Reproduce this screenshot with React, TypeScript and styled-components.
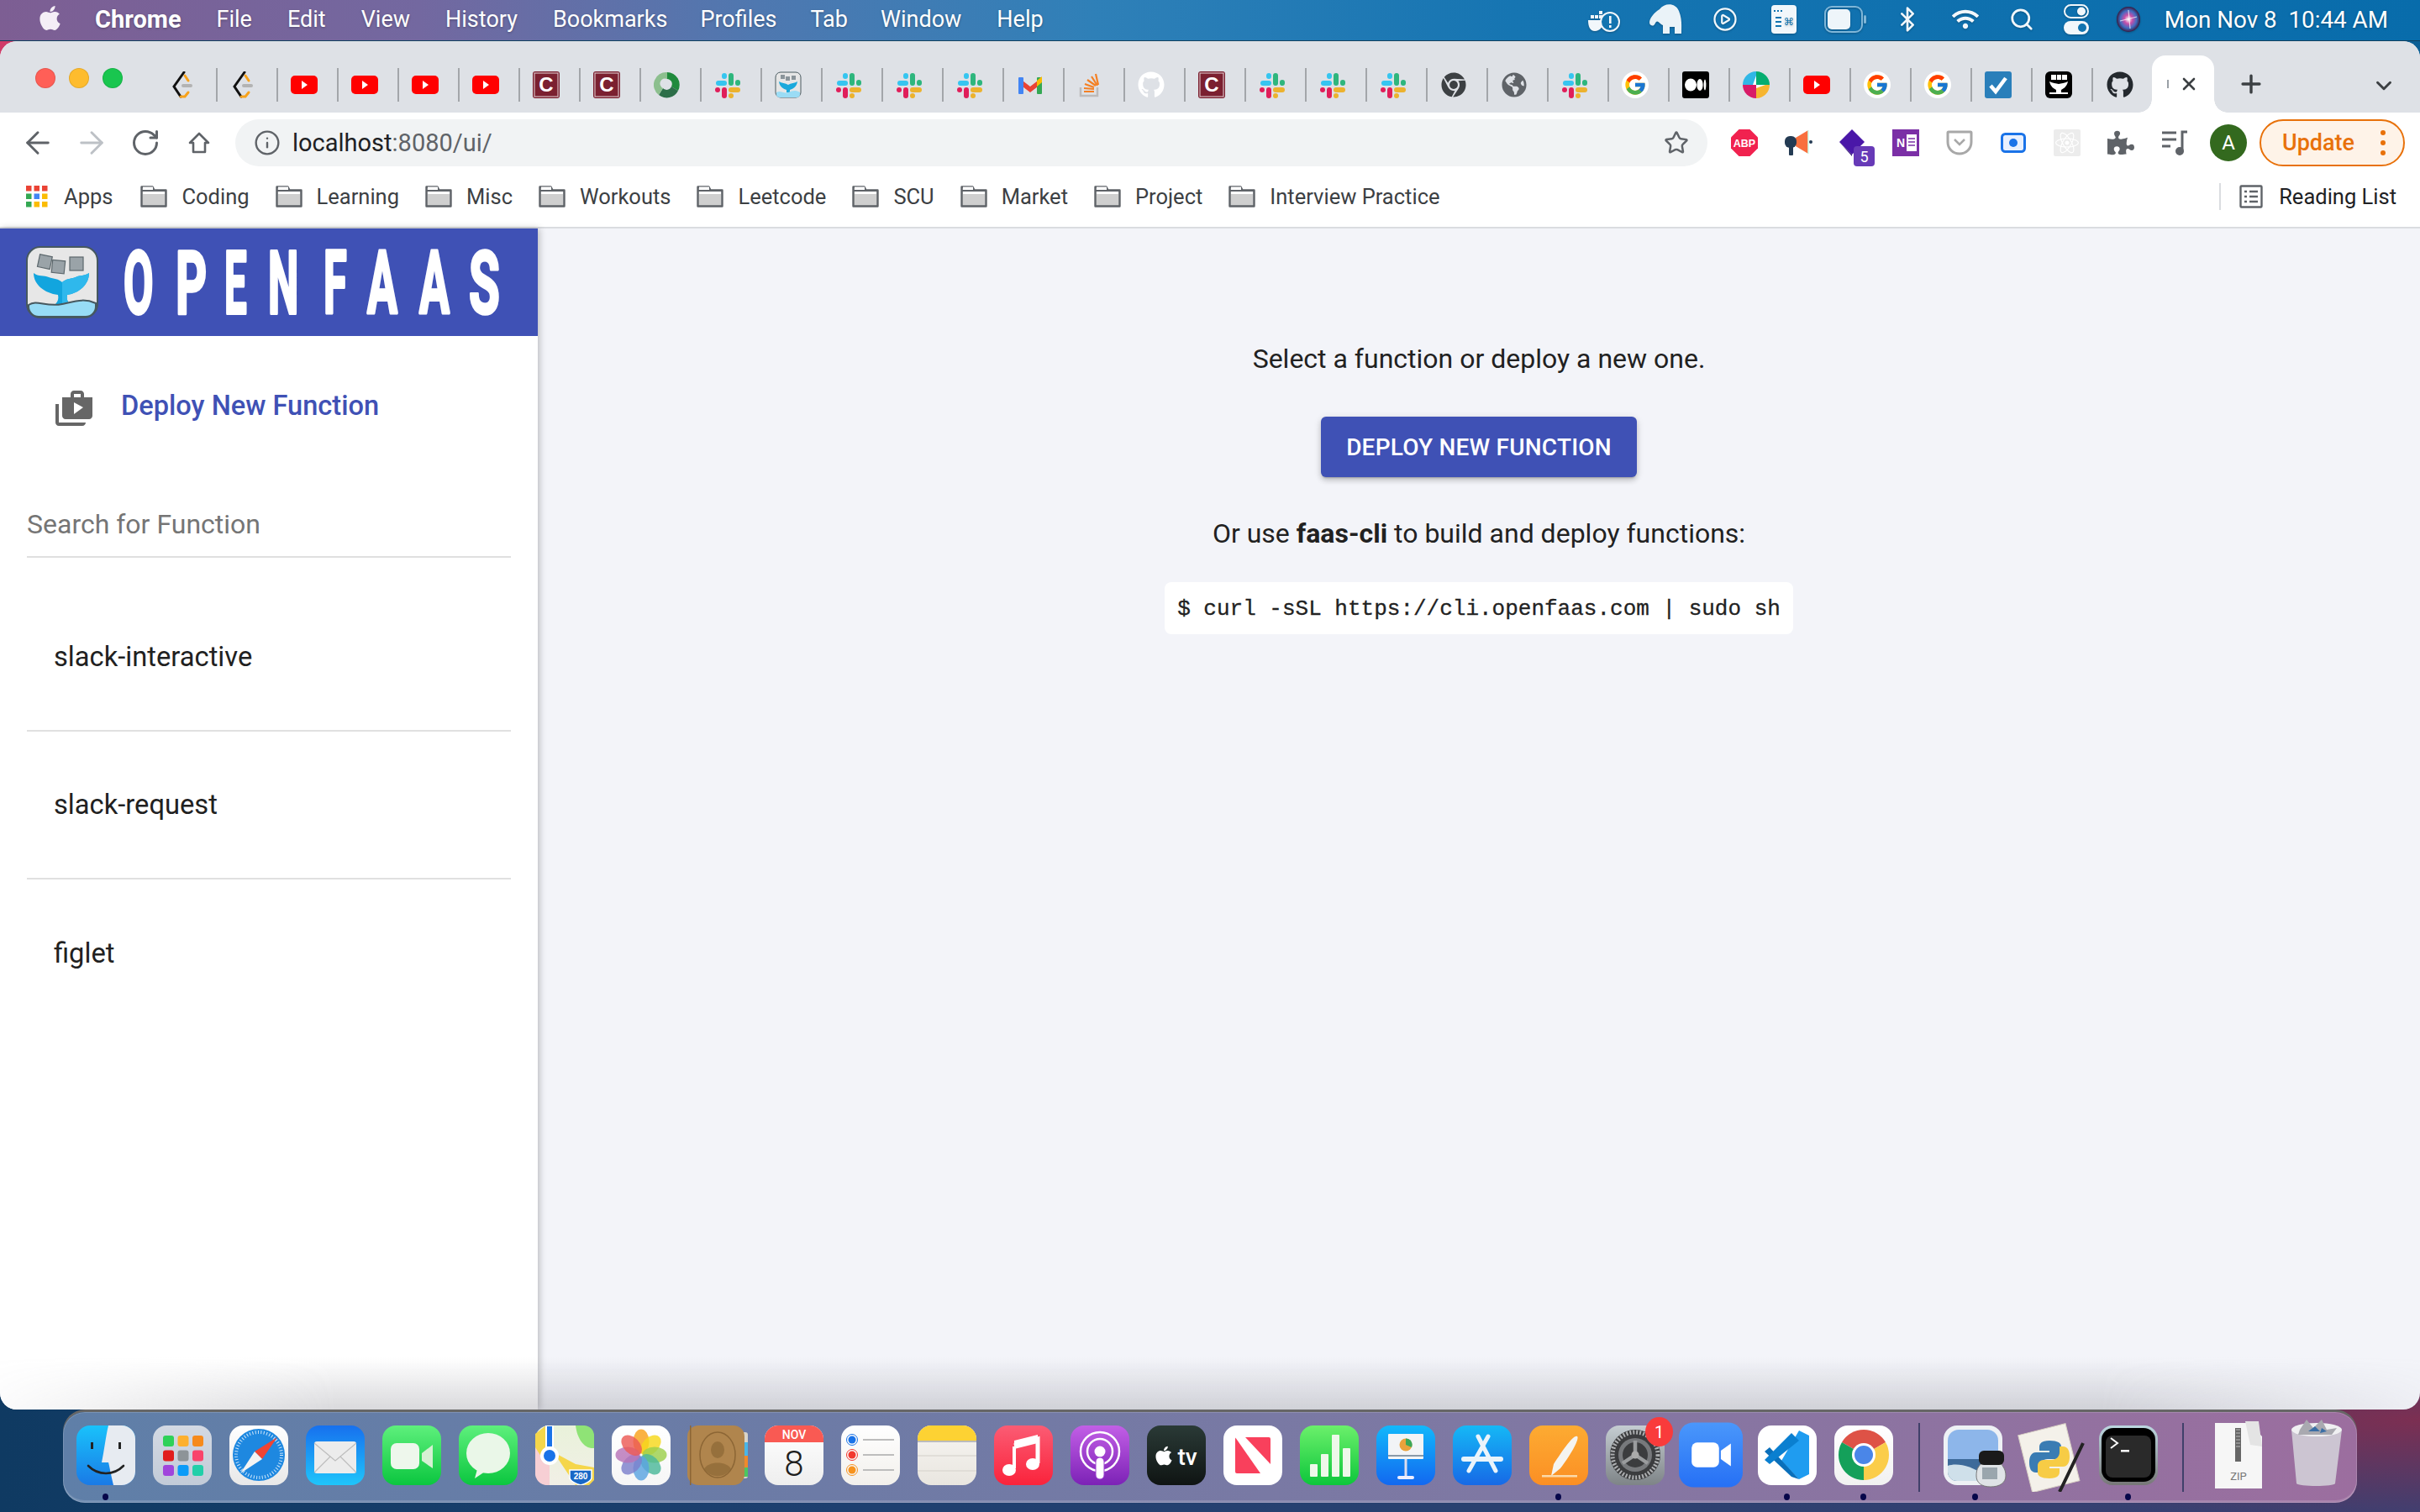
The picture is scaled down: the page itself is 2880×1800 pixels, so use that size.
import React from "react";
import styled, { createGlobalStyle } from "styled-components";
import { ArrowLeft, ArrowRight, RotateCw, Info, Star, Search, Plus, X, ChevronDown, Bluetooth, CirclePlay } from "lucide-react";
import { FaApple, FaGithub, FaChrome, FaGlobeAmericas, FaWifi, FaPuzzlePiece, FaReact } from "react-icons/fa";
import { FcGoogle } from "react-icons/fc";
import { MdShopTwo } from "react-icons/md";

const Global = createGlobalStyle`
  html, body { margin: 0; padding: 0; width: 2880px; height: 1800px; overflow: hidden; }
  body { font-family: Roboto, "Liberation Sans", sans-serif; }
  * { box-sizing: border-box; }
`;

const Screen = styled.div`
  width: 2880px; height: 1800px; display: flex; flex-direction: column; overflow: hidden;
  background:
    linear-gradient(90deg, #d03b68 0, #a03a6c 560px, #1a5a80 590px, #0c5f95 2880px) top / 100% 80px no-repeat,
    radial-gradient(700px 120px at 100% 1690px, #7c2f52 0%, rgba(124,47,82,0) 100%),
    linear-gradient(90deg, #0f3a62 0, #1e4070 1000px, #2a4170 1800px, #3c4072 2880px);
`;
const MenuBar = styled.header`
  height: 49px; flex: none; display: flex; align-items: center; justify-content: space-between;
  padding: 0 38px 2px 44px; color: #fff; font-size: 27px; text-shadow: 0 1px 3px rgba(0,0,0,.3);
  background: linear-gradient(90deg, #7d5e93 0, #7368a0 500px, #4f78b0 900px, #2f80b8 1300px, #1675b2 1800px, #086cab 2880px);
  border-bottom: 1px solid #11405e;
`;
const MenuLeft = styled.nav`display: flex; align-items: center;`;
const AppleMark = styled(FaApple)`width: 31px; height: 33px; margin-right: 38px; margin-top: -3px; color: #f4eef6;`;
const MenuItem = styled.span<{ $bold?: boolean; $gap: number }>`
  font-weight: ${p => (p.$bold ? 700 : 400)}; font-size: ${p => (p.$bold ? 29 : 27)}px; margin-right: ${p => p.$gap}px; white-space: nowrap;
`;
const StatusArea = styled.div`display: flex; align-items: center;`;
const StatusSlot = styled.span<{ $w: number }>`
  width: ${p => p.$w}px; display: flex; align-items: center; justify-content: center; color: #f2f7fb;
  svg { display: block; filter: drop-shadow(0 1px 1px rgba(0,0,0,.25)); }
`;
const Clock = styled.span`margin-left: 12px; white-space: pre; font-size: 27.8px;`;

const Win = styled.div`
  height: 1629px; flex: none; border-radius: 20px; background: #f3f4f9; display: flex; flex-direction: column;
  position: relative; overflow: hidden;
`;
const TabStrip = styled.div`
  height: 85px; flex: none; background: #dee1e6; display: flex; align-items: flex-end; padding-left: 42px;
`;
const Lights = styled.div`display: flex; gap: 16px; width: 145px; height: 53px; align-self: flex-end; flex: none;`;
const Light = styled.span<{ $c: string }>`
  width: 24px; height: 24px; border-radius: 50%; background: ${p => p.$c}; box-shadow: inset 0 0 0 1px rgba(0,0,0,.1);
`;
const TabSlot = styled.span<{ $last?: boolean }>`
  width: 72px; height: 40px; margin-bottom: 13px; display: flex; align-items: center; justify-content: center;
  padding-right: 9px; border-right: ${p => (p.$last ? "none" : "2px solid #a3a6aa")}; flex: none;
  svg { display: block; }
`;
const ActiveTab = styled.div`
  width: 74px; height: 68px; margin-left: -2px; background: #fff; border-radius: 16px 16px 0 0; position: relative; flex: none;
  display: flex; align-items: center; padding-left: 18px; gap: 12px; color: #3c4043;
  &::before, &::after {
    content: ""; position: absolute; bottom: 0; width: 16px; height: 16px;
  }
  &::before { left: -16px; background: radial-gradient(circle at 0 0, transparent 15.5px, #fff 16px); }
  &::after { right: -16px; background: radial-gradient(circle at 100% 0, transparent 15.5px, #fff 16px); }
`;
const TabSliver = styled.span`width: 2px; height: 10px; background: #9aa0a6;`;
const NewTab = styled(Plus)`color: #3c4043; margin: 0 0 17px 27px; flex: none;`;
const TabMenu = styled(ChevronDown)`color: #3c4043; margin: 0 0 17px 126px; flex: none;`;

const AddressRow = styled.div`
  height: 72px; flex: none; background: #fff; display: flex; align-items: center; padding-left: 13px;
`;
const ToolButton = styled.span<{ $dim?: boolean }>`
  width: 64px; display: flex; justify-content: center; align-items: center; color: ${p => (p.$dim ? "#bdc1c6" : "#5f6368")};
  svg { display: block; }
`;
const Omnibox = styled.div`
  width: 1752px; height: 56px; margin: 0 12px 0 11px; border-radius: 28px; background: #f1f3f4;
  display: flex; align-items: center; padding: 0 22px; color: #5f6368; font-size: 29px; flex: none;
`;
const UrlHost = styled.span`color: #202124; margin-left: 14px;`;
const UrlRest = styled.span`color: #5f6368;`;
const StarIcon = styled(Star)`margin-left: auto; color: #5f6368;`;
const ExtSlot = styled.span`width: 64px; display: flex; justify-content: center; align-items: center; svg { display: block; }`;
const Avatar = styled.span`
  width: 44px; height: 44px; border-radius: 50%; background: #33691e; color: #fff; font-size: 24px;
  display: flex; align-items: center; justify-content: center;
`;
const UpdateButton = styled.span`
  width: 173px; height: 56px; margin-left: 5px; border: 2px solid #e8710a; border-radius: 28px; background: #fef3e8;
  color: #e8710a; font-size: 27px; font-weight: 500; display: flex; align-items: center; justify-content: space-between;
  padding: 0 21px 0 25px; flex: none;
`;
const Kebab = styled.span`
  width: 6px; height: 6px; border-radius: 50%; background: #e8710a; box-shadow: 0 -12px 0 #e8710a, 0 12px 0 #e8710a;
`;
const Bookmarks = styled.div`
  height: 66px; flex: none; background: #fff; border-bottom: 2px solid #dadce0; display: flex; align-items: center;
  padding: 0 28px 9px 31px; color: #3c4043; font-size: 25.5px; white-space: nowrap;
`;
const Bookmark = styled.span<{ $gap?: number; $inner?: number }>`
  display: flex; align-items: center; gap: ${p => p.$inner ?? 17}px; margin-right: ${p => p.$gap ?? 31}px; svg { display: block; flex: none; }
`;
const ReadingList = styled.span`
  margin-left: auto; height: 32px; border-left: 2px solid #dadce0; padding-left: 22px; display: flex; align-items: center; gap: 19px;
  color: #202124; svg { display: block; }
`;

const Body = styled.div`flex: 1; display: flex; min-height: 0;`;
const Sidebar = styled.aside`
  width: 640px; flex: none; background: #fff; box-shadow: 2px 0 8px rgba(0,0,0,.24); display: flex; flex-direction: column; z-index: 1;
`;
const Brand = styled.div`height: 128px; background: #3f51b5; padding-left: 31px; display: flex; align-items: center; flex: none;`;
const BrandWord = styled.svg`display: block; flex: none;`;
const DeployLink = styled.div`
  height: 166px; display: flex; align-items: center; padding-left: 64px; gap: 32px; color: #3f51b5; font-size: 32.6px; font-weight: 500; flex: none;
`;
const DeployIcon = styled(MdShopTwo)`color: #666; width: 48px; height: 48px; position: relative; top: 4px; flex: none;`;
const SearchField = styled.input`
  display: block; width: 576px; height: 66px; margin: 32px 32px 0; flex: none; border: 0; border-bottom: 2px solid #e0e0e0; outline: 0;
  background: transparent; padding: 0 0 12px 0; font: 400 32px Roboto, sans-serif; color: #212121;
  &::placeholder { color: #757575; opacity: 1; }
`;
const FunctionList = styled.ul`list-style: none; margin: 31px 32px 0; padding: 0;`;
const FunctionRow = styled.li`
  height: 176px; padding-left: 32px; display: flex; align-items: center; font-size: 32.7px; color: #212121;
  border-bottom: 2px solid #e0e0e0;
  &:last-child { border-bottom: 0; }
`;
const Main = styled.main`
  flex: 1; display: flex; flex-direction: column; align-items: center; padding-top: 131px; color: #212121; font-size: 32px;
`;
const Lead = styled.p`margin: 0; line-height: 48px;`;
const DeployButton = styled.button`
  width: 376px; height: 72px; margin: 45px 0 43px; border: 0; border-radius: 6px; background: #3f51b5; color: #fff; flex: none;
  font: 500 28px Roboto, sans-serif; letter-spacing: .2px; text-transform: uppercase;
  box-shadow: 0 3px 2px -2px rgba(0,0,0,.2), 0 4px 6px rgba(0,0,0,.14), 0 2px 10px rgba(0,0,0,.12);
`;
const CodeBox = styled.code`
  margin-top: 34px; height: 62px; width: 748px; background: #fff; border-radius: 8px; display: flex; align-items: center; justify-content: center;
  font: 26px "Liberation Mono", monospace; color: #222; white-space: pre; -webkit-text-stroke: .3px #222; flex: none; padding-top: 2px;
`;
const DockShade = styled.div`
  position: absolute; left: 0; right: 0; bottom: 0; height: 62px; pointer-events: none; z-index: 2;
  background: linear-gradient(180deg, rgba(120,120,130,0), rgba(120,120,130,.28));
  -webkit-mask-image: linear-gradient(90deg, rgba(0,0,0,.1), #000 400px, #000 2500px, rgba(0,0,0,.15));
`;

const DockBar = styled.footer`
  position: relative; margin: 3px 75px 0 75px; height: 108px; flex: none; border-radius: 26px; padding-left: 5px; display: flex;
  background: linear-gradient(90deg, #5f7fa8 0, #6d7ba6 900px, #7f78a3 1700px, #9c6e9f 2730px);
  box-shadow: inset 0 0 0 1px rgba(255,255,255,.16), inset 0 -3px 0 rgba(255,255,255,.14), 0 -3px 0 #666;
`;
const DockItem = styled.div<{ $w?: number; $up?: number }>`
  width: ${p => p.$w ?? 91}px; flex: none; display: flex; flex-direction: column; align-items: center; position: relative;
  padding-top: ${p => 16 - (p.$up ?? 0)}px;
  svg { display: block; flex: none; }
`;
const DockDot = styled.span`position: absolute; bottom: 3px; width: 7px; height: 8px; border-radius: 50%; background: #07074a;`;
const DockDivider = styled.span<{ $w: number }>`
  width: ${p => p.$w}px; flex: none; display: flex; justify-content: center; padding-top: 13px;
  &::before { content: ""; width: 2px; height: 82px; background: #40406a; }
`;
const BadgeCount = styled.span`
  position: absolute; top: 6px; right: 0; width: 33px; height: 35px; border-radius: 50%; background: #f93b3b; color: #fff; font-size: 20px;
  display: flex; align-items: center; justify-content: center;
`;

/* ---------- favicons ---------- */
const Fav = ({ children, w = 32, h = 32 }: { children: React.ReactNode; w?: number; h?: number }) => (
  <svg width={w} height={h} viewBox={`0 0 ${w} ${h}`}>{children}</svg>
);
const Leet = () => (<Fav><path d="M17 1 5 18l8 12" fill="none" stroke="#111" strokeWidth="3" strokeLinecap="round" /><path d="M18 5l4 6M13 30h5l4-5" fill="none" stroke="#f7a21b" strokeWidth="3" strokeLinecap="round" /><rect x="14" y="15" width="13" height="4" rx="2" fill="#b3b3b3" /></Fav>);
const Yt = () => (<Fav><rect x="0" y="5" width="32" height="22" rx="5" fill="#f00" /><path d="M13 11l7 5-7 5z" fill="#fff" /></Fav>);
const Cee = () => (<Fav><rect width="32" height="32" rx="3" fill="#7b2030" /><rect x="2" y="2" width="28" height="28" fill="none" stroke="#e7d5d8" strokeWidth="1" /><text x="16" y="24" textAnchor="middle" fontSize="24" fontWeight="700" fontFamily="Liberation Sans" fill="#fff">C</text></Fav>);
const GreenSpin = () => (<Fav><path d="M16 1a15 15 0 0 1 13 22l-8-5a6 6 0 0 0-5-9z" fill="#1f8a3c" /><path d="M29 23A15 15 0 0 1 6 28l5-8a6 6 0 0 0 10-2z" fill="#2c6e49" /><path d="M6 28A15 15 0 0 1 16 1v8a6 6 0 0 0-5 11z" fill="#8cbf8e" /><path d="M14 11l7 5-7 5z" fill="#dee1e6" /></Fav>);
const Slack = () => (<Fav><rect x="2" y="11" width="13" height="6" rx="3" fill="#36c5f0" /><rect x="9" y="2" width="6" height="7" rx="3" fill="#36c5f0" /><rect x="17" y="2" width="6" height="15" rx="3" fill="#2eb67d" /><rect x="25" y="10" width="6" height="7" rx="3" fill="#2eb67d" /><rect x="17" y="19" width="14" height="6" rx="3" fill="#ecb22e" /><rect x="17" y="26" width="6" height="6" rx="3" fill="#ecb22e" /><rect x="9" y="19" width="6" height="13" rx="3" fill="#e01e5a" /><rect x="1" y="19" width="6" height="6" rx="3" fill="#e01e5a" /></Fav>);
const FaasMini = () => (<Fav><rect x="1" y="1" width="30" height="30" rx="6" fill="#e6e6e6" stroke="#4a5a60" /><rect x="7" y="4" width="5" height="5" fill="#8a949a" /><rect x="13" y="6" width="5" height="5" fill="#8a949a" /><rect x="20" y="5" width="5" height="5" fill="#8a949a" /><path d="M5 12c3 2 8 2 11 4 3-2 8-2 11-4-1 7-6 9-9 10v3h-4v-3c-3-1-8-3-9-10z" fill="#1aa9dc" /><path d="M2 25c5-3 9 2 14 0s9-3 14 0v2a4 4 0 0 1-4 4H6a4 4 0 0 1-4-4z" fill="#9bdcf5" /></Fav>);
const Gmail = () => (<Fav><path d="M3 8l13 10 13-10v7L16 25 3 15z" fill="#ea4335" /><rect x="2" y="7" width="6" height="20" rx="1" fill="#4285f4" /><rect x="24" y="7" width="6" height="20" rx="1" fill="#34a853" /><path d="M24 11l6-5v7l-6 5z" fill="#fbbc04" /></Fav>);
const Stack = () => (<Fav><path d="M4 19v10h20V19" fill="none" stroke="#bcbbbb" strokeWidth="2.5" /><path d="M8 24h12M8 20l12 1M9 15l11 4M12 10l10 7M17 6l7 11M22 3l3 13" stroke="#f48024" strokeWidth="2.2" /></Fav>);
const Circled = styled.span<{ $bg: string }>`width: 32px; height: 32px; border-radius: 50%; background: ${p => p.$bg}; display: flex; align-items: center; justify-content: center;`;
const Google = () => (<Circled $bg="#fff"><FcGoogle size={28} /></Circled>);
const GithubWhite = () => (<FaGithub size={32} color="#fff" />);
const GithubDark = () => (<FaGithub size={32} color="#24292e" />);
const ChromeGrey = () => (<FaChrome size={30} color="#3c4043" />);
const GlobeGrey = () => (<FaGlobeAmericas size={30} color="#5f6368" />);
const Medium = () => (<Fav><rect width="32" height="32" rx="3" fill="#000" /><ellipse cx="10" cy="16" rx="7" ry="7.5" fill="#fff" /><ellipse cx="21" cy="16" rx="3.6" ry="7" fill="#fff" /><ellipse cx="27" cy="16" rx="1.4" ry="6.5" fill="#fff" /></Fav>);
const Slice = () => (<Fav><path d="M16 16V0a16 16 0 0 1 16 16z" fill="#06ad70" /><path d="M16 16h16a16 16 0 0 1-16 16z" fill="#f6b530" /><path d="M16 16v16A16 16 0 0 1 0 16z" fill="#d81b67" /><path d="M16 16H0A16 16 0 0 1 16 0z" fill="#31b7e6" /><path d="M16 16L16 5l-4 11zM16 16h11l-11 4z" fill="#fff" /></Fav>);
const Tick = () => (<Fav><rect width="32" height="32" rx="3" fill="#2a7fba" /><path d="M7 17l6 7L25 8" fill="none" stroke="#fff" strokeWidth="4.5" /></Fav>);
const WhaleBlack = () => (<Fav><rect width="32" height="32" rx="6" fill="#000" /><rect x="7" y="4" width="6" height="6" fill="#fff" /><rect x="14" y="4" width="5" height="6" fill="#fff" /><rect x="20" y="4" width="6" height="6" fill="#fff" /><path d="M5 12c4 2 8 2 11 3 3-1 7-1 11-3-1 6-6 9-8 10v3h-6v-3c-2-1-7-4-8-10z" fill="#fff" /><path d="M5 25h22v2H5z" fill="#fff" /></Fav>);

const tabIcons = [Leet, Leet, Yt, Yt, Yt, Yt, Cee, Cee, GreenSpin, Slack, FaasMini, Slack, Slack, Slack, Gmail, Stack, GithubWhite, Cee, Slack, Slack, Slack, ChromeGrey, GlobeGrey, Slack, Google, Medium, Slice, Yt, Google, Google, Tick, WhaleBlack, GithubDark];

const Folder = () => (<svg width="32" height="27" viewBox="0 0 32 27"><path d="M1.5 25.5V2.5h13l2 4h14v19z" fill="#cfcfcf" stroke="#5f6368" strokeWidth="2.4" strokeLinejoin="round" /><path d="M2 7h28" stroke="#5f6368" strokeWidth="2" /><rect x="3" y="2.5" width="12" height="3.5" fill="#fff" /><rect x="3" y="8" width="26" height="3" fill="#fff" /></svg>);
const AppsGrid = () => (<svg width="26" height="26" viewBox="0 0 26 26">{[["#ea4335", "#ea4335", "#ea4335"], ["#34a853", "#4285f4", "#fbbc04"], ["#34a853", "#fbbc04", "#fbbc04"]].flatMap((r, y) => r.map((c, x) => <rect key={`${x}${y}`} x={x * 9.5} y={y * 9.5} width="6.5" height="6.5" fill={c} />))}</svg>);
const ListIcon = () => (<svg width="28" height="28" viewBox="0 0 28 28" fill="none" stroke="#5f6368" strokeWidth="2.4"><rect x="1.5" y="1.5" width="25" height="25" rx="1" /><path d="M6 8h3M12 8h10M6 14h3M12 14h10M6 20h3M12 20h10" /></svg>);

/* ---------- status icons ---------- */
const DockerAlert = () => (<svg width="40" height="34" viewBox="0 0 40 34"><path d="M1 18h18c0 8-4 13-10 13S1 25 1 18z" fill="#f2f7fb" /><rect x="4" y="12" width="4" height="4" fill="#f2f7fb" /><rect x="9" y="12" width="4" height="4" fill="#f2f7fb" /><rect x="14" y="12" width="4" height="4" fill="#f2f7fb" /><rect x="14" y="7" width="4" height="4" fill="#f2f7fb" /><circle cx="27" cy="20" r="11" fill="#1274b0" stroke="#f2f7fb" strokeWidth="2" /><rect x="26" y="13" width="2.6" height="9" fill="#f2f7fb" /><rect x="26" y="24" width="2.6" height="3" fill="#f2f7fb" /></svg>);
const Elephant = () => (<svg width="42" height="38" viewBox="0 0 42 38"><path d="M14 7C20-1 33-1 37 9c4 10 3 17 3 27h-8v-8h-6v8h-8V26c-4-2-6-6-8-4s-2 6-6 4C-1 24 4 13 14 7z" fill="#eaf3f8" /></svg>);
const CmdWindow = () => (<svg width="30" height="34" viewBox="0 0 30 34"><rect width="30" height="34" rx="4" fill="#f2f7fb" /><path d="M3 7h2M7 7h2M11 7h2" stroke="#1274b0" strokeWidth="2" /><path d="M5 15h7M5 20h7M5 25h7" stroke="#1274b0" strokeWidth="2" /><text x="21" y="24" textAnchor="middle" fontSize="12" fontFamily="DejaVu Sans" fill="#1274b0">⌘</text></svg>);
const Battery = () => (<svg width="52" height="32" viewBox="0 0 52 32"><rect x="1" y="1" width="44" height="30" rx="8" fill="none" stroke="#7fb6d8" strokeWidth="2" /><rect x="4" y="4" width="27" height="24" rx="5" fill="#eef5fa" /><rect x="47" y="11" width="3" height="10" rx="1.5" fill="#7fb6d8" /></svg>);
const Control = () => (<svg width="30" height="36" viewBox="0 0 30 36"><rect x="1" y="1" width="28" height="15" rx="7.5" fill="none" stroke="#f2f7fb" strokeWidth="2" /><circle cx="21" cy="8.5" r="5" fill="#f2f7fb" /><rect y="20" width="30" height="16" rx="8" fill="#f2f7fb" /><circle cx="22" cy="28" r="5" fill="#1274b0" /></svg>);
const Siri = () => (<svg width="28" height="30" viewBox="0 0 28 30"><defs><radialGradient id="si"><stop offset="0" stopColor="#fff" /><stop offset=".35" stopColor="#c94fa8" /><stop offset=".7" stopColor="#3f6cc0" /><stop offset="1" stopColor="#3a1a40" /></radialGradient></defs><ellipse cx="14" cy="15" rx="14" ry="15" fill="url(#si)" /><path d="M4 17l20-5M14 4l2 22" stroke="#fff" strokeWidth="1.2" opacity=".7" /></svg>);

/* ---------- extension icons ---------- */
const Abp = () => (<svg width="32" height="32" viewBox="0 0 32 32"><path d="M9.5 0h13L32 9.5v13L22.5 32h-13L0 22.5v-13z" fill="#f1224f" /><text x="16" y="20.5" textAnchor="middle" fontSize="12.5" fontWeight="700" fontFamily="Liberation Sans" fill="#fff">ABP</text></svg>);
const Mega = () => (<svg width="34" height="32" viewBox="0 0 34 32"><path d="M14 10 29 1v28L14 20z" fill="#f9703e" /><path d="M29 1v28" stroke="#cfe" strokeWidth="1.5" /><rect x="1" y="8" width="14" height="14" rx="6" fill="#243b53" /><rect x="6" y="20" width="5" height="11" rx="1" fill="#243b53" /><circle cx="32" cy="15" r="2" fill="#243b53" /></svg>);
const StackExt = () => (<svg width="32" height="32" viewBox="0 0 32 32"><path d="M16 0l15 15-15 15L1 15z" fill="#4a17a8" /><path d="M1 15l15 15v2z" fill="#2d0f72" /></svg>);
const ExtBadgeWrap = styled.span`position: relative; display: block;`;
const ExtBadge = styled.span`
  position: absolute; left: 18px; top: 20px; width: 25px; height: 24px; border-radius: 4px; background: #673ab7; color: #fff; font-size: 18px;
  display: flex; align-items: center; justify-content: center;
`;
const OneNote = () => (<svg width="32" height="32" viewBox="0 0 32 32"><rect width="32" height="32" fill="#7b2fa6" /><rect x="17" y="6" width="12" height="20" fill="#fff" /><path d="M19 11h8M19 15h8M19 19h8" stroke="#7b2fa6" strokeWidth="1.5" /><text x="10" y="21" textAnchor="middle" fontSize="14" fontWeight="700" fontFamily="Liberation Sans" fill="#fff">N</text></svg>);
const Pocket = () => (<svg width="32" height="30" viewBox="0 0 32 30"><path d="M3 2h26a1 1 0 0 1 1 1v11c0 8-6 14-14 14S2 22 2 14V3a1 1 0 0 1 1-1z" fill="#fff" stroke="#a8a8a8" strokeWidth="3" /><path d="M10 11l6 6 6-6" fill="none" stroke="#a8a8a8" strokeWidth="2.5" /></svg>);
const BlueRec = () => (<svg width="30" height="24" viewBox="0 0 30 24"><rect x="1.5" y="1.5" width="27" height="21" rx="4" fill="#e8f0fe" stroke="#1a73e8" strokeWidth="3" /><circle cx="15" cy="12" r="5" fill="#1a73e8" /></svg>);
const ReactExt = styled.span`width: 32px; height: 32px; background: #ececec; border-radius: 2px; display: flex; align-items: center; justify-content: center; color: #fff;`;
const MusicList = () => (<svg width="32" height="30" viewBox="0 0 32 30" fill="none" stroke="#5f6368" strokeWidth="3"><path d="M1 3h17M1 11h17M1 19h10" /><path d="M25 26V2h6" /><circle cx="22" cy="25" r="3.5" fill="#5f6368" /></svg>);
const HomeIcon = () => (<svg width="26" height="26" viewBox="0 0 26 26" fill="none" stroke="#5f6368" strokeWidth="2.6" strokeLinejoin="round"><path d="M13 2 2 13h4v11h14V13h4z" /></svg>);

/* ---------- openfaas logo ---------- */
const FaasLogo = () => (
  <svg width="86" height="86" viewBox="0 0 86 86">
    <rect x="1" y="1" width="84" height="84" rx="16" fill="#e7e7e7" stroke="#46585f" strokeWidth="2" />
    <g fill="#9aa3a8" stroke="#5d686d" strokeWidth="1.2">
      <rect x="15" y="11" width="15" height="15" transform="rotate(12 22 18)" />
      <rect x="31" y="17" width="15" height="15" transform="rotate(6 38 24)" />
      <rect x="52" y="13" width="16" height="16" />
    </g>
    <path d="M9 32c6 5 12 2 18 5 6 2 12 2 16 6 4-4 10-4 16-6 6-3 10-1 16-5 0 14-12 24-26 26-1 4 0 8 3 11H35c3-3 4-7 3-11C22 56 9 46 9 32z" fill="#12a5de" />
    <path d="M43 43c4-4 10-4 16-6 6-3 10-1 16-5 0 14-12 24-26 26-1 4 0 8 3 11h-9z" fill="#2fb8ec" />
    <path d="M3 70c10-7 20 3 40-1 18-4 26-7 40-1v4a12 12 0 0 1-12 12H15A12 12 0 0 1 3 72z" fill="#97dcf6" stroke="#46585f" strokeWidth="2" />
  </svg>
);
const brandLetters: [string, number, number][] = [
  ["O", 30, .5], ["P", 92, .56], ["E", 150, .46], ["N", 202, .5], ["F", 268, .49], ["A", 320, .52], ["A", 382, .52], ["S", 441, .58],
];

/* ---------- dock art ---------- */
let gid = 0;
const Tile = ({ from, to, children, w = 70, h = 71 }: { from: string; to: string; children?: React.ReactNode; w?: number; h?: number }) => {
  const id = `t${++gid}`;
  return (
    <svg width={w} height={h} viewBox="0 0 70 71">
      <defs><linearGradient id={id} x1="0" y1="0" x2="0" y2="1"><stop offset="0" stopColor={from} /><stop offset="1" stopColor={to} /></linearGradient></defs>
      <rect width="70" height="71" rx="16" fill={`url(#${id})`} />
      {children}
    </svg>
  );
};
const Finder = () => (<Tile from="#19c2fb" to="#1a7ae6"><path d="M38 0h16a16 16 0 0 1 16 16v39a16 16 0 0 1-16 16H44c-3-12-5-24-6-27H30C33 30 35 12 38 0z" fill="#e7ebf1" /><rect x="17" y="20" width="3" height="8" fill="#222" /><rect x="50" y="20" width="3" height="8" fill="#222" /><path d="M14 48c12 12 30 12 42 0" fill="none" stroke="#222" strokeWidth="2.6" strokeLinecap="round" /></Tile>);
const Launchpad = () => (<Tile from="#d3d9e3" to="#c2cbd8">{["#2ed158", "#fdb02f", "#f68a1c", "#e11d1d", "#8d9498", "#f9446b", "#a045dc", "#0a9bf8", "#22cfa9"].map((c, i) => (<rect key={i} x={12 + (i % 3) * 17.5} y={12 + Math.floor(i / 3) * 17.5} width="13" height="13" rx="3" fill={c} />))}</Tile>);
const Safari = () => (<Tile from="#fff" to="#e8e8e8"><circle cx="35" cy="35" r="31" fill="#1e88e0" /><circle cx="35" cy="35" r="27" fill="none" stroke="#cfe6fa" strokeWidth="4" strokeDasharray="1 2.4" /><path d="M57 14 30 31l9 9z" fill="#f04433" /><path d="M13 57l26-17-9-9z" fill="#f4f4f4" /></Tile>);
const Mail = () => (<Tile from="#1770ee" to="#1fc5fb"><rect x="10" y="19" width="50" height="38" rx="3" fill="#ececec" /><path d="M10 21l25 21 25-21M10 56l19-19M60 56 41 37" fill="none" stroke="#bdbdbd" strokeWidth="1.2" /></Tile>);
const FaceTime = () => (<Tile from="#5ef07c" to="#0bc63f"><rect x="10" y="21" width="34" height="31" rx="7" fill="#eef7ec" /><path d="M47 33l13-10v28L47 42z" fill="#d5f0d3" /></Tile>);
const Messages = () => (<Tile from="#5ef07c" to="#0bc63f"><ellipse cx="35" cy="33" rx="26" ry="24" fill="#eaf7e8" /><path d="M22 52l-3 11 12-8z" fill="#eaf7e8" /></Tile>);
const Maps = () => (<Tile from="#e9f2da" to="#f1efe6"><path d="M48 0h10a12 12 0 0 1 12 12v15C58 28 50 16 48 0z" fill="#8fe376" /><path d="M0 20l17 28v23H14A14 14 0 0 1 0 57z" fill="#f7cfd4" /><path d="M0 10v16l9 14 8-8V0H13z" fill="#f5d64a" /><path d="M22 32 48 71h16l6-6V50L48 46z" fill="#f5d64a" /><path d="M13 0h8v26h-8z" fill="#1a73e8" stroke="#fff" strokeWidth="2" /><circle cx="17" cy="36" r="11" fill="#fff" /><circle cx="17" cy="36" r="7" fill="#1a73e8" /><path d="M41 53h26v9c0 4-8 8-13 9-5-1-13-5-13-9z" fill="#1868c7" stroke="#fff" strokeWidth="1.5" /><text x="54" y="64" textAnchor="middle" fontSize="10" fontWeight="700" fill="#fff" fontFamily="Liberation Sans">280</text></Tile>);
const Photos = () => (<Tile from="#fff" to="#f6f6f6">{["#f9a11b", "#f6d81b", "#9ccf4c", "#4cb89a", "#5aa3e0", "#7d80cc", "#b874b8", "#ec5a55"].map((c, i) => (<ellipse key={i} cx="35" cy="19" rx="9.5" ry="14.5" fill={c} opacity=".82" transform={`rotate(${i * 45} 35 35)`} />))}</Tile>);
const Contacts = () => (<svg width="72" height="71" viewBox="0 0 72 71"><rect x="60" y="8" width="12" height="55" rx="3" fill="#d9d4c9" /><rect x="65" y="20" width="7" height="16" fill="#49b5e8" /><rect x="65" y="36" width="7" height="14" fill="#ef8a2b" /><rect x="65" y="50" width="7" height="11" fill="#4cc760" /><rect width="68" height="71" rx="13" fill="#b0854d" /><rect x="3" width="1.5" height="71" fill="#8c6635" /><ellipse cx="36" cy="35" rx="21" ry="27" fill="none" stroke="#8c6635" strokeWidth="1.5" /><ellipse cx="36" cy="29" rx="8" ry="10" fill="#8c6635" opacity=".7" /><path d="M20 52c4-10 28-10 32 0-8 11-24 11-32 0z" fill="#8c6635" opacity=".7" /></svg>);
const Calendar = () => (<Tile from="#fff" to="#eee"><path d="M0 20V16A16 16 0 0 1 16 0h38a16 16 0 0 1 16 16v4z" fill="#f95a53" /><text x="35" y="16" textAnchor="middle" fontSize="14" fontWeight="500" fill="#fff" fontFamily="Roboto">NOV</text><text x="35" y="60" textAnchor="middle" fontSize="42" fill="#1e1e1e" fontFamily="Roboto" fontWeight="300">8</text></Tile>);
const Reminders = () => (<Tile from="#fff" to="#f2f0ec">{[["#1a73e8", 17], ["#f2382f", 35], ["#f7931e", 53]].map(([c, y]) => (<g key={c as string}><circle cx="13" cy={y as number} r="4.5" fill={c as string} /><circle cx="13" cy={y as number} r="6.5" fill="none" stroke={c as string} /><rect x="26" y={(y as number) - 1} width="37" height="2" fill="#bdbdbd" /></g>))}</Tile>);
const Notes = () => (<Tile from="#f7f5f1" to="#e9e6e0"><path d="M0 18V16A16 16 0 0 1 16 0h38a16 16 0 0 1 16 16v2z" fill="#fdd233" /><rect y="18" width="70" height="2" fill="#bbb" /><path d="M0 36h70M0 54h70" stroke="#dcd9d2" strokeWidth="1.5" /></Tile>);
const Music = () => (<Tile from="#fb5c74" to="#fa233b"><path d="M24 25v26" stroke="#fff" strokeWidth="4" /><path d="M24 24 52 16v29" fill="none" stroke="#fff" strokeWidth="5" /><path d="M24 18 52 11v10L24 28z" fill="#fff" /><ellipse cx="18" cy="53" rx="8" ry="7" fill="#fff" /><ellipse cx="46" cy="46" rx="8" ry="7" fill="#fff" /></Tile>);
const Podcasts = () => (<Tile from="#c25fe6" to="#7c22b6"><circle cx="35" cy="31" r="23" fill="none" stroke="#fff" strokeWidth="2.5" /><circle cx="35" cy="31" r="15" fill="none" stroke="#fff" strokeWidth="2.5" /><circle cx="35" cy="31" r="6.5" fill="#fff" /><rect x="30" y="38" width="10" height="26" rx="5" fill="#fff" stroke="#9a3fce" /></Tile>);
const AppleTv = () => (<Tile from="#2a3a36" to="#0f1413"><g transform="translate(7 23)"><FaApple size={26} color="#fff" /></g><text x="48" y="47" textAnchor="middle" fontSize="28" fontWeight="500" fill="#fff" fontFamily="Roboto">tv</text></Tile>);
const News = () => (<Tile from="#fff" to="#fff"><rect x="14" y="14" width="42" height="43" rx="2" fill="#f9405c" /><path d="M14 14h12l30 32v11H44z" fill="#fff" /></Tile>);
const Numbers = () => (<Tile from="#6bf06b" to="#0dc63b">{[[12, 46], [25, 34], [38, 11], [51, 27]].map(([x, y]) => (<rect key={x} x={x} y={y} width="9" height={61 - y} rx="1" fill="#eef8ea" />))}</Tile>);
const Keynote = () => (<Tile from="#12b8fb" to="#1268f0"><rect x="14" y="10" width="42" height="30" rx="1" fill="#f2f4f6" /><circle cx="35" cy="23" r="7.5" fill="#e9a23b" /><path d="M35 23v-7.5A7.5 7.5 0 0 1 42 26z" fill="#3aa757" /><rect x="14" y="35" width="42" height="2" fill="#8a9aa8" /><rect x="33.5" y="40" width="3" height="20" fill="#dde" /><rect x="25" y="60" width="20" height="4" rx="2" fill="#eef" /></Tile>);
const AppStore = () => (<Tile from="#15b8f6" to="#1769e6"><path d="M30 13l21 41M42 13 19 54" fill="none" stroke="#eaf4fb" strokeWidth="5" strokeLinecap="round" /><rect x="10" y="37" width="50" height="6" rx="3" fill="#eaf4fb" /></Tile>);
const Pages = () => (<Tile from="#fdab32" to="#fb8f24"><path d="M57 13c3 2-6 20-20 38l-11 9 3-14C40 29 53 10 57 13z" fill="#f5f4f0" /><rect x="15" y="59" width="42" height="2.5" fill="#fbd9a8" /></Tile>);
const Settings = () => (<Tile from="#c5cdd2" to="#7e8487"><circle cx="35" cy="35" r="30" fill="#3b3c3e" /><circle cx="35" cy="35" r="27" fill="none" stroke="#aeb0b2" strokeWidth="5" strokeDasharray="2 2" /><circle cx="35" cy="35" r="20" fill="#77797c" /><circle cx="35" cy="35" r="15" fill="#3b3c3e" /><path d="M35 35V18M35 35 20 45M35 35l15 10" stroke="#9a9c9e" strokeWidth="4.5" /><circle cx="35" cy="35" r="4.5" fill="#aaa" /></Tile>);
const ZoomApp = () => (<Tile w={76} h={78} from="#4a97fb" to="#2670f5"><rect x="14" y="22" width="30" height="27" rx="6" fill="#fff" /><path d="M46 31l11-8v25l-11-8z" fill="#fff" /></Tile>);
const VsCode = () => (<Tile from="#fff" to="#fff"><path d="M49 6l12 6v46l-12 6-21-22z" fill="#1f9cf0" /><path d="M49 64 14 26l-6 5 32 30z" fill="#0a6fba" /><path d="M49 18 14 46l-6-5L40 9z" fill="#0a7fd0" /></Tile>);
const ChromeApp = () => (<Tile from="#fff" to="#f1f1f1"><path d="M35 35 9 20a30 30 0 0 1 52 0z" fill="#de5246" /><path d="M35 35l26-15A30 30 0 0 1 35 65z" fill="#fbcd4a" /><path d="M35 65A30 30 0 0 1 9 20l26 15z" fill="#14a05a" /><circle cx="35" cy="35" r="14" fill="#fff" /><circle cx="35" cy="35" r="11" fill="#4a86e8" /></Tile>);
const Preview = () => (<svg width="76" height="74" viewBox="0 0 76 74"><rect width="70" height="71" rx="16" fill="#eef1f5" /><path d="M5 18A13 13 0 0 1 18 5h34a13 13 0 0 1 13 13v26H5z" fill="#8db6ea" /><path d="M5 40h60v15a11 11 0 0 1-11 11H16A11 11 0 0 1 5 55z" fill="#3d6a9a" /><path d="M5 48c10-4 30 0 40 10v8H16A11 11 0 0 1 5 55z" fill="#cfe0ea" /><path d="M44 46c-3 4-5 6-5 14 0 8 6 13 17 13s18-5 18-13c0-8-3-10-5-14z" fill="#dfe3e6" stroke="#777" /><rect x="46" y="50" width="18" height="14" fill="#9aa6ad" /><rect x="42" y="30" width="30" height="17" rx="6" fill="#1a1a1a" /></svg>);
const Python = () => (<svg width="82" height="84" viewBox="0 0 82 84"><g transform="rotate(-14 40 42)"><rect x="8" y="8" width="58" height="70" fill="#f4f1ea" stroke="#d8d0c4" /></g><path d="M36 20c-10 0-12 4-12 8v4h12v2H20c-6 0-8 6-8 12 0 7 2 12 8 12h4v-7c0-5 4-9 10-9h9c4 0 7-3 7-7v-8c0-4-4-7-14-7z" fill="#3a7cb3" transform="translate(2 3)" /><path d="M44 65c10 0 12-4 12-8v-4H44v-2h16c6 0 8-6 8-12 0-7-2-12-8-12h-4v7c0 5-4 9-10 9h-9c-4 0-7 3-7 7v8c0 4 4 7 14 7z" fill="#f7cc45" transform="translate(-6 3)" /><path d="M78 26 53 78 50 84" stroke="#222" strokeWidth="4" fill="none" /></svg>);
const Terminal = () => (<Tile from="#bcd7e0" to="#777"><rect x="3" y="3" width="64" height="64" rx="14" fill="#000" /><rect x="8" y="12" width="54" height="50" rx="8" fill="#2a2a2a" /><path d="M14 15l8 6-8 6" fill="none" stroke="#fff" strokeWidth="2" /><rect x="26" y="29" width="10" height="2.5" fill="#fff" /></Tile>);
const Zip = () => (<svg width="56" height="82" viewBox="0 0 56 82"><path d="M0 4h40l16 16v62H0z" fill="#f6f6f6" /><path d="M36 2h16l4 30-14-2z" fill="#e4e4e4" /><rect x="24" y="10" width="7" height="40" fill="#666" /><path d="M25 12h5M25 16h5M25 20h5M25 24h5M25 28h5M25 32h5" stroke="#bbb" /><text x="28" y="72" textAnchor="middle" fontSize="13" fill="#777" fontFamily="Roboto">ZIP</text></svg>);
const Trash = () => (<svg width="64" height="82" viewBox="0 0 64 82"><path d="M2 12h60l-8 64c-1 4-44 4-46 0z" fill="#d5d5da" opacity=".85" /><ellipse cx="32" cy="12" rx="30" ry="8" fill="#f0f0f2" /><path d="M12 12l8-12 8 10 10-10 6 12 12-2-6 8H10z" fill="#a9a9b0" /><path d="M22 14l8-6 6 6zM38 10l6 4-8 2z" fill="#3b6ea5" /></svg>);

const dockApps: { C: React.FC; dot?: boolean }[] = [
  { C: Finder, dot: true }, { C: Launchpad }, { C: Safari }, { C: Mail }, { C: FaceTime }, { C: Messages }, { C: Maps }, { C: Photos },
  { C: Contacts }, { C: Calendar }, { C: Reminders }, { C: Notes }, { C: Music }, { C: Podcasts }, { C: AppleTv }, { C: News },
  { C: Numbers }, { C: Keynote }, { C: AppStore }, { C: Pages, dot: true },
];
const bookmarks = ["Coding", "Learning", "Misc", "Workouts", "Leetcode", "SCU", "Market", "Project", "Interview Practice"];
const menus: [string, number][] = [["File", 42], ["Edit", 42], ["View", 42], ["History", 42], ["Bookmarks", 39], ["Profiles", 40], ["Tab", 39], ["Window", 42], ["Help", 0]];

const App: React.FC = () => (
  <Screen>
    <Global />
    <MenuBar>
      <MenuLeft>
        <AppleMark />
        <MenuItem $bold $gap={42}>Chrome</MenuItem>
        {menus.map(([m, g]) => <MenuItem key={m} $gap={g}>{m}</MenuItem>)}
      </MenuLeft>
      <StatusArea>
        <StatusSlot $w={74}><DockerAlert /></StatusSlot>
        <StatusSlot $w={73}><Elephant /></StatusSlot>
        <StatusSlot $w={68}><CirclePlay size={30} strokeWidth={1.8} /></StatusSlot>
        <StatusSlot $w={72}><CmdWindow /></StatusSlot>
        <StatusSlot $w={76}><Battery /></StatusSlot>
        <StatusSlot $w={70}><Bluetooth size={32} strokeWidth={2} /></StatusSlot>
        <StatusSlot $w={68}><FaWifi size={32} /></StatusSlot>
        <StatusSlot $w={66}><Search size={30} strokeWidth={2.2} /></StatusSlot>
        <StatusSlot $w={64}><Control /></StatusSlot>
        <StatusSlot $w={61}><Siri /></StatusSlot>
        <Clock>Mon Nov 8  10:44 AM</Clock>
      </StatusArea>
    </MenuBar>
    <Win>
      <TabStrip>
        <Lights>
          <Light $c="#ff5f57" /><Light $c="#febc2e" /><Light $c="#19c64f" />
        </Lights>
        {tabIcons.map((I, i) => <TabSlot key={i} $last={i === tabIcons.length - 1}><I /></TabSlot>)}
        <ActiveTab><TabSliver /><X size={24} strokeWidth={2.6} /></ActiveTab>
        <NewTab size={34} strokeWidth={2.4} />
        <TabMenu size={30} strokeWidth={2.4} />
      </TabStrip>
      <AddressRow>
        <ToolButton><ArrowLeft size={42} strokeWidth={1.7} /></ToolButton>
        <ToolButton $dim><ArrowRight size={42} strokeWidth={1.7} /></ToolButton>
        <ToolButton><RotateCw size={36} strokeWidth={2} /></ToolButton>
        <ToolButton><HomeIcon /></ToolButton>
        <Omnibox>
          <Info size={32} strokeWidth={1.8} />
          <UrlHost>localhost<UrlRest>:8080/ui/</UrlRest></UrlHost>
          <StarIcon size={30} strokeWidth={2} />
        </Omnibox>
        <ExtSlot><Abp /></ExtSlot>
        <ExtSlot><Mega /></ExtSlot>
        <ExtSlot><ExtBadgeWrap><StackExt /><ExtBadge>5</ExtBadge></ExtBadgeWrap></ExtSlot>
        <ExtSlot><OneNote /></ExtSlot>
        <ExtSlot><Pocket /></ExtSlot>
        <ExtSlot><BlueRec /></ExtSlot>
        <ExtSlot><ReactExt><FaReact size={28} /></ReactExt></ExtSlot>
        <ExtSlot><FaPuzzlePiece size={32} color="#5f6368" /></ExtSlot>
        <ExtSlot><MusicList /></ExtSlot>
        <ExtSlot><Avatar>A</Avatar></ExtSlot>
        <UpdateButton>Update<Kebab /></UpdateButton>
      </AddressRow>
      <Bookmarks>
        <Bookmark $gap={33} $inner={19}><AppsGrid />Apps</Bookmark>
        {bookmarks.map(b => <Bookmark key={b}><Folder />{b}</Bookmark>)}
        <ReadingList><ListIcon />Reading List</ReadingList>
      </Bookmarks>
      <Body>
        <Sidebar>
          <Brand>
            <FaasLogo />
            <BrandWord width="490" height="128" viewBox="0 0 490 128">
              {brandLetters.map(([l, x, sx], i) => (
                <text key={i} transform={`translate(${x} 100.5) scale(${sx} 1)`} fontFamily="Roboto" fontWeight="700" fontSize="103" fill="#fff" stroke="#fff" strokeWidth="3" strokeLinejoin="round" vectorEffect="non-scaling-stroke">{l}</text>
              ))}
            </BrandWord>
          </Brand>
          <DeployLink><DeployIcon />Deploy New Function</DeployLink>
          <SearchField placeholder="Search for Function" readOnly />
          <FunctionList>
            <FunctionRow>slack-interactive</FunctionRow>
            <FunctionRow>slack-request</FunctionRow>
            <FunctionRow>figlet</FunctionRow>
          </FunctionList>
        </Sidebar>
        <Main>
          <Lead>Select a function or deploy a new one.</Lead>
          <DeployButton>Deploy New Function</DeployButton>
          <Lead>Or use <b>faas-cli</b> to build and deploy functions:</Lead>
          <CodeBox>$ curl -sSL https://cli.openfaas.com | sudo sh</CodeBox>
        </Main>
      </Body>
      <DockShade />
    </Win>
    <DockBar>
      {dockApps.map(({ C, dot }, i) => <DockItem key={i}><C />{dot && <DockDot />}</DockItem>)}
      <DockItem><Settings /><BadgeCount>1</BadgeCount></DockItem>
      <DockItem $w={90} $up={4}><ZoomApp /></DockItem>
      <DockItem><VsCode /><DockDot /></DockItem>
      <DockItem><ChromeApp /><DockDot /></DockItem>
      <DockDivider $w={42} />
      <DockItem><Preview /><DockDot /></DockItem>
      <DockItem $up={5}><Python /></DockItem>
      <DockItem><Terminal /><DockDot /></DockItem>
      <DockDivider $w={40} />
      <DockItem $up={7}><Zip /></DockItem>
      <DockItem $w={95} $up={7}><Trash /></DockItem>
    </DockBar>
  </Screen>
);

export default App;
